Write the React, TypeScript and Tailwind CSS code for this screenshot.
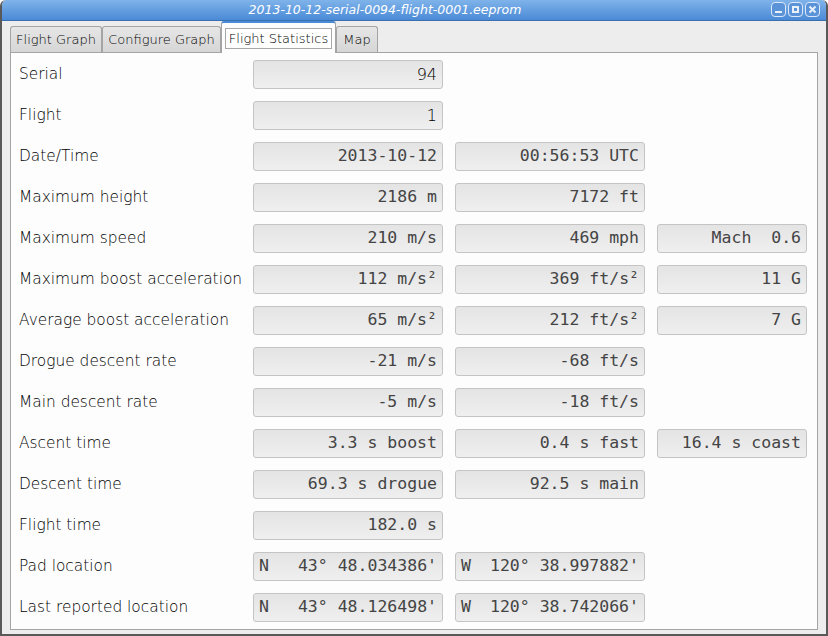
import React from 'react';

type Cell = { text: string; sans?: boolean; prefix?: string };
type Row = { label: string; cells: Cell[] };

const ROWS: Row[] = [
  { label: 'Serial', cells: [{ text: '94', sans: true }] },
  { label: 'Flight', cells: [{ text: '1', sans: true }] },
  { label: 'Date/Time', cells: [{ text: '2013-10-12' }, { text: '00:56:53 UTC' }] },
  { label: 'Maximum height', cells: [{ text: '2186 m' }, { text: '7172 ft' }] },
  { label: 'Maximum speed', cells: [{ text: '210 m/s' }, { text: '469 mph' }, { text: 'Mach  0.6' }] },
  { label: 'Maximum boost acceleration', cells: [{ text: '112 m/s²' }, { text: '369 ft/s²' }, { text: '11 G' }] },
  { label: 'Average boost acceleration', cells: [{ text: '65 m/s²' }, { text: '212 ft/s²' }, { text: '7 G' }] },
  { label: 'Drogue descent rate', cells: [{ text: '-21 m/s' }, { text: '-68 ft/s' }] },
  { label: 'Main descent rate', cells: [{ text: '-5 m/s' }, { text: '-18 ft/s' }] },
  { label: 'Ascent time', cells: [{ text: '3.3 s boost' }, { text: '0.4 s fast' }, { text: '16.4 s coast' }] },
  { label: 'Descent time', cells: [{ text: '69.3 s drogue' }, { text: '92.5 s main' }] },
  { label: 'Flight time', cells: [{ text: '182.0 s' }] },
  { label: 'Pad location', cells: [{ text: "43° 48.034386'", prefix: 'N' }, { text: "120° 38.997882'", prefix: 'W' }] },
  { label: 'Last reported location', cells: [{ text: "43° 48.126498'", prefix: 'N' }, { text: "120° 38.742066'", prefix: 'W' }] },
];

function Field({ cell }: { cell: Cell }) {
  return (
    <div className="h-[29px] rounded-[3px] border border-[#c4c4c4] bg-gradient-to-b from-[#e4e4e4] to-[#efefef] flex items-center justify-between px-[5px] text-[#444] whitespace-pre">
      {cell.prefix ? (
        <span className="font-['DejaVu_Sans_Mono',monospace] text-[16.5px]">{cell.prefix}</span>
      ) : <span />}
      <span className={cell.sans ? "font-['DejaVu_Sans',sans-serif] font-extralight text-black text-[16px]" : "font-['DejaVu_Sans_Mono',monospace] text-[16.5px]"}>
        {cell.text}
      </span>
    </div>
  );
}

function WinButton({ children }: { children: React.ReactNode }) {
  return (
    <div className="w-[15px] h-[15px] rounded-[4px] border border-[#dbe8f7] bg-[#5a93d8] flex items-center justify-center">
      {children}
    </div>
  );
}

export default function App() {
  const tabs = [
    { label: 'Flight Graph', w: 'w-[92px]' },
    { label: 'Configure Graph', w: 'w-[119px]' },
    { label: 'Flight Statistics', w: 'w-[115px]', active: true },
    { label: 'Map', w: 'w-[42px]' },
  ];

  return (
    <div className="w-[828px] h-[636px] bg-[#ededed] border-x-2 border-b-2 border-[#595959] rounded-t-[6px] flex flex-col overflow-hidden font-['DejaVu_Sans',sans-serif]">
      {/* Title bar */}
      <div className="h-[21px] shrink-0 bg-gradient-to-b from-[#7fb3ea] to-[#4a8ad6] border-b border-[#3a6fb0] flex items-center relative">
        <div className="flex-1 text-center text-white italic font-extralight text-[12.5px] leading-none pr-[58px]">
          2013-10-12-serial-0094-flight-0001.eeprom
        </div>
        <div className="absolute right-[6px] top-[2px] flex gap-[2px]">
          <WinButton>
            <div className="w-[7px] h-[2px] bg-[#e8f0fa] mt-[5px]" />
          </WinButton>
          <WinButton>
            <div className="w-[7px] h-[7px] border-2 border-[#e8f0fa]" />
          </WinButton>
          <WinButton>
            <svg width="9" height="9" viewBox="0 0 9 9">
              <path d="M1.5 1.5 L7.5 7.5 M7.5 1.5 L1.5 7.5" stroke="#e8f0fa" strokeWidth="2" />
            </svg>
          </WinButton>
        </div>
      </div>

      {/* Tabs */}
      <div className="h-[31px] shrink-0 flex items-end pl-[8px]">
        {tabs.map(t =>
          t.active ? (
            <div key={t.label} className={`${t.w} h-[32px] -mb-px z-10 bg-[#fdfdfd] border border-b-0 border-[#a4a4a4] border-t-2 border-t-[#4a8ad6] rounded-t-[3px] flex items-center justify-center`}>
              <span className="border border-[#a8a8a8] bg-white px-[3px] leading-[19px] text-[13px] font-extralight text-black">{t.label}</span>
            </div>
          ) : (
            <div key={t.label} className={`${t.w} h-[26px] bg-gradient-to-b from-[#e6e6e6] to-[#d6d6d6] border border-b-0 border-[#a4a4a4] rounded-t-[3px] flex items-center justify-center text-[13px] font-extralight text-black`}>
              {t.label}
            </div>
          )
        )}
      </div>

      {/* Panel */}
      <div className="mx-[8px] h-[578px] shrink-0 bg-[#fdfdfd] border border-[#a4a4a4] pt-[7px] pl-[8px]">
        <div className="grid grid-cols-[222px_190px_190px_150px] gap-x-[12px] gap-y-[12px]">
          {ROWS.map(r => (
            <React.Fragment key={r.label}>
              <div className="h-[29px] flex items-center whitespace-nowrap text-[15.4px] font-extralight text-black">{r.label}</div>
              {r.cells.map((c, i) => <Field key={i} cell={c} />)}
              {Array.from({ length: 3 - r.cells.length }).map((_, i) => <div key={'e' + i} />)}
            </React.Fragment>
          ))}
        </div>
      </div>
    </div>
  );
}
